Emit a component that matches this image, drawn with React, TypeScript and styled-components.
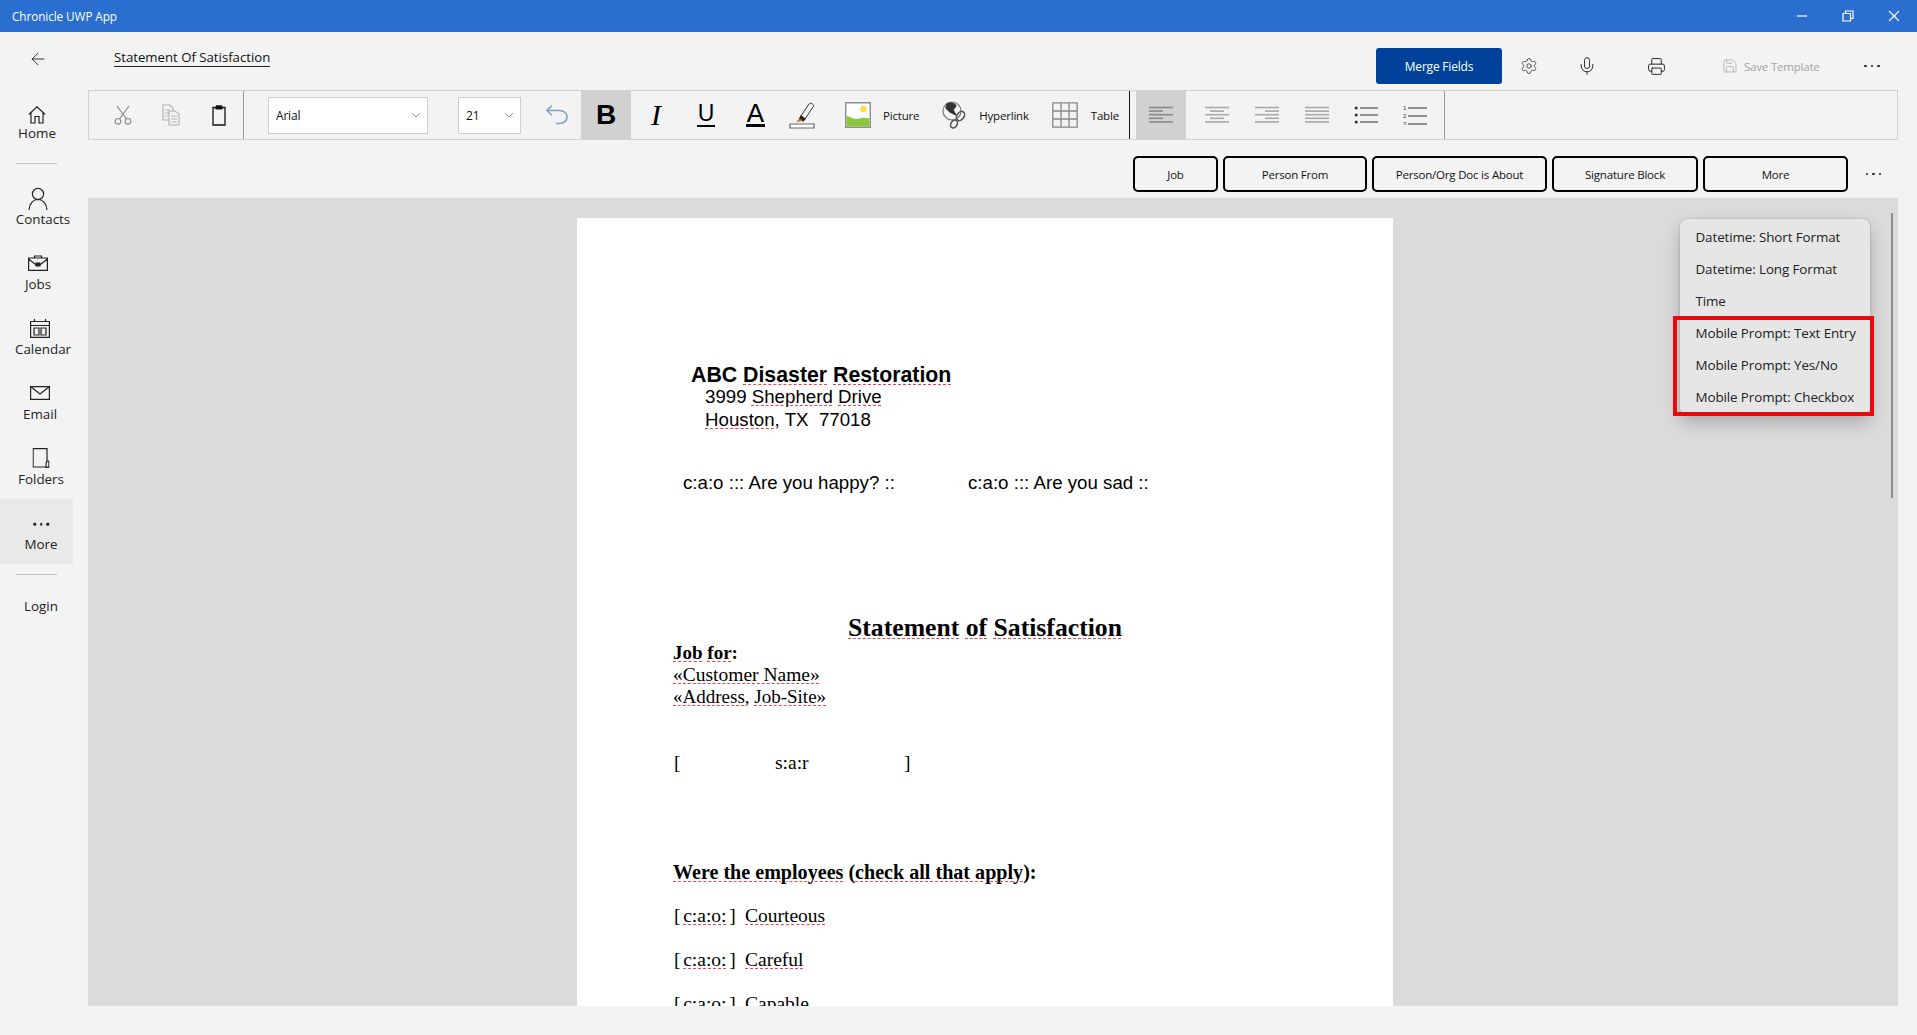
import React from "react";
import styled, { createGlobalStyle } from "styled-components";
import { ArrowLeft, Settings, Mic, Printer, Save } from "lucide-react";

const Global = createGlobalStyle`
  html, body { margin: 0; padding: 0; background: #f3f3f3; overflow: hidden; }
  * { box-sizing: border-box; }
  #root { width: 1917px; height: 1035px; }
`;
const UI = `"Open Sans", "Noto Sans", sans-serif`;

const Shell = styled.div`
  width: 1917px; height: 1035px; display: flex; flex-direction: column;
  background: #f3f3f3; font-family: ${UI}; color: #1a1a1a; overflow: hidden;
`;
const TitleBar = styled.header`
  height: 32px; flex: none; background: #2a6ecf; display: flex; align-items: center; color: #fff;
  padding-left: 12px;
`;
const AppName = styled.span` font-size: 11.8px; letter-spacing: -0.1px; flex: 1; `;
const WinButton = styled.button`
  width: 46px; height: 32px; border: 0; background: none; padding: 0; color: #fff;
  display: flex; align-items: center; justify-content: center;
`;
const Body = styled.div` flex: 1; display: flex; min-height: 0; `;
const Sidebar = styled.nav` width: 88px; flex: none; display: flex; flex-direction: column; `;
const BackButton = styled.div`
  height: 58px; padding-left: 28px; padding-top: 17px; color: #222;
`;
const NavItem = styled.div<{ $active?: boolean; $h?: number }>`
  width: 73px; height: ${p => p.$h ?? 65}px; position: relative; flex: none;
  background: ${p => (p.$active ? "#e9e9e9" : "transparent")};
`;
const NavIcon = styled.span<{ $x: number; $y: number }>`
  position: absolute; left: ${p => p.$x}px; top: ${p => p.$y}px; transform: translate(-50%, -50%);
  display: flex; color: #222;
`;
const NavLabel = styled.span<{ $x: number; $y: number }>`
  position: absolute; left: ${p => p.$x}px; top: ${p => p.$y}px; transform: translate(-50%, -50%);
  font-size: 13.4px; color: #222; white-space: nowrap;
`;
const NavRule = styled.hr<{ $before: number; $after: number }>`
  width: 41px; height: 1px; margin: ${p => p.$before}px 0 ${p => p.$after}px 16px; border: 0; background: #c4c4c4; flex: none;
`;
const Main = styled.main` flex: 1; min-width: 0; padding: 0 19px 29px 0; display: flex; flex-direction: column; `;
const HeaderRow = styled.div` height: 58px; flex: none; display: flex; padding-top: 16px; `;
const DocTitle = styled.a`
  margin-left: 26px; height: 19px; line-height: 19px; font-size: 13.2px; color: #111;
  border-bottom: 1px solid #222;
`;
const Actions = styled.div` margin-left: auto; display: flex; align-items: center; height: 36px; padding-right: 4px; `;
const MergeButton = styled.button`
  width: 126px; height: 36px; border: 0; border-radius: 3px; background: #00429a; color: #fff;
  font: 12px ${UI}; letter-spacing: -0.2px;
`;
const ActionSlot = styled.div<{ $w: number }>`
  width: ${p => p.$w}px; height: 36px; display: flex; align-items: center; justify-content: center; color: #222;
`;
const SaveSlot = styled.div`
  width: 156px; height: 36px; display: flex; align-items: center; gap: 6px; padding-left: 28px;
  color: #a3a3a3; font-size: 11.5px; letter-spacing: -0.2px; white-space: nowrap;
`;
const Dots = styled.span`
  display: flex; gap: 4px;
  & > i { width: 2.5px; height: 2.5px; border-radius: 50%; background: #222; display: block; }
`;
const Toolbar = styled.div`
  height: 50px; flex: none; display: flex; align-items: stretch; border: 1px solid #d2d2d2; background: #f3f3f3;
`;
const ToolGroupLead = styled.div` display: flex; padding-left: 9px; `;
const ToolButton = styled.div<{ $w?: number; $on?: boolean; $ml?: number; $pl?: number }>`
  width: ${p => p.$w ?? 50}px; margin-left: ${p => p.$ml ?? 0}px; padding-left: ${p => p.$pl ?? 0}px; flex: none;
  display: flex; align-items: center; justify-content: center;
  background: ${p => (p.$on ? "#d1d1d1" : "transparent")}; color: #111;
`;
const ToolDivider = styled.div<{ $c?: string; $ml?: number }>`
  width: 1px; flex: none; background: ${p => p.$c ?? "#9a9a9a"}; margin-left: ${p => p.$ml ?? 0}px;
`;
const Combo = styled.div<{ $w: number; $ml: number }>`
  width: ${p => p.$w}px; margin-left: ${p => p.$ml}px; height: 37px; align-self: center; flex: none;
  background: #fff; border: 1px solid #cfcfcf; display: flex; align-items: center; justify-content: space-between;
  padding: 0 6px 0 7px; font-size: 12px; color: #111; letter-spacing: -0.2px;
`;
const GlyphBold = styled.span` font: bold 28px "Liberation Sans", sans-serif; color: #000; `;
const GlyphItalic = styled.span` font: italic 30px "Liberation Serif", serif; color: #000; `;
const GlyphLined = styled.span<{ $t: number; $fs: number }>`
  font: ${p => p.$fs}px/20px "Liberation Sans", sans-serif; color: #000; display: block; height: 24px;
  padding: 0 1px; border-bottom: ${p => p.$t}px solid #000; text-align: center;
`;
const LabeledTool = styled.div<{ $ml: number; $gap: number }>`
  display: flex; align-items: center; gap: ${p => p.$gap}px; margin-left: ${p => p.$ml}px; flex: none;
  font-size: 11.5px; letter-spacing: -0.2px; color: #111;
`;
const FieldRow = styled.div` height: 58px; flex: none; padding-top: 16px; display: flex; justify-content: flex-end; gap: 5px; `;
const FieldButton = styled.button<{ $w: number }>`
  width: ${p => p.$w}px; height: 36px; border: 2px solid #000; border-radius: 5px; background: #f3f3f3;
  font: 11.5px ${UI}; letter-spacing: -0.2px; color: #111; padding: 0; white-space: nowrap;
`;
const FieldMore = styled.div` width: 45px; height: 36px; display: flex; align-items: center; justify-content: center; padding-right: 4px; `;
const Canvas = styled.section` flex: 1; min-height: 0; background: #dbdbdb; position: relative; overflow: hidden; `;
const Page = styled.article`
  width: 816px; height: 900px; margin: 20px 0 0 489px; background: #fff; padding-top: 146px; color: #000;
`;
const Line = styled.div<{ $left: number; $top?: number; $h?: number; $sans?: boolean; $fs: number; $bold?: boolean }>`
  margin-left: ${p => p.$left}px; margin-top: ${p => p.$top ?? 0}px; height: ${p => p.$h ?? 22}px; line-height: ${p => p.$h ?? 22}px;
  font-family: ${p => (p.$sans ? `"Liberation Sans", Arial, sans-serif` : `"Liberation Serif", "Times New Roman", serif`)};
  font-size: ${p => p.$fs}px; font-weight: ${p => (p.$bold ? 700 : 400)}; white-space: pre;
`;
const Slot = styled.span<{ $w: number }>` width: ${p => p.$w}px; display: inline-block; `;
const Mark = styled.span`
  width: 71px; display: inline-block; word-spacing: -2.2px;
`;
const Sq = styled.span`
  text-decoration: underline dashed #f0474f 1px; text-underline-offset: 2px;
`;
const Menu = styled.div`
  position: absolute; top: 21px; right: 28px; width: 190px; padding: 2px 0 2px; background: #e6e6e6; border-radius: 7px;
  box-shadow: 0 8px 18px rgba(0,0,0,0.22), 0 0 2px rgba(0,0,0,0.25);
`;
const MenuItem = styled.div`
  height: 32px; line-height: 32px; padding-left: 15.5px; font-size: 13.4px; color: #222; white-space: nowrap; letter-spacing: -0.1px;
`;
const Callout = styled.div`
  position: absolute; left: 1585px; top: 118px; width: 201px; height: 100px; border: 4px solid #e8090f; pointer-events: none;
`;
const Scroll = styled.div`
  position: absolute; right: 5px; top: 15px; width: 2px; height: 285px; background: #8c8c8c;
`;

const Ic: React.FC<{ w: number; h?: number; children: React.ReactNode }> = ({ w, h, children }) => (
  <svg width={w} height={h ?? w} viewBox={`0 0 ${w} ${h ?? w}`} fill="none" stroke="currentColor" strokeWidth={1.2}>{children}</svg>
);
const Chevron = () => (
  <Ic w={10} h={6}><path d="M1 1 L5 5 L9 1" stroke="#888" strokeWidth={0.9} /></Ic>
);
const DotsIcon = () => <Dots><i /><i /><i /></Dots>;
const Lines = ({ rows, c = "#9b9b9b" }: { rows: [number, number][]; c?: string }) => (
  <Ic w={24} h={20}>
    {rows.map(([a, b], i) => (
      <path key={i} d={`M${a} ${2.5 + i * 3.6} H${b}`} stroke={c} strokeWidth={1.6} />
    ))}
  </Ic>
);

const nav = [
  { label: "Contacts", ix: 38, lx: 43, iy: 25, icon: <Ic w={20} h={23}><circle cx={10} cy={6.5} r={5.6} /><path d="M1 22.5 C1.5 15.5 5.5 12 10 12 S18.5 15.5 19 22.5" /></Ic> },
  { label: "Jobs", ix: 38, lx: 38, iy: 24, icon: <Ic w={20} h={16}><path d="M6.5 3 V1 H13.5 V3 M.6 3 H19.4 V15.4 H.6 Z M.6 4 L7.5 9.5 H12.5 L19.4 4" /><path d="M8 8 H12 V11 H8 Z" fill="currentColor" /></Ic> },
  { label: "Calendar", ix: 40, lx: 43, iy: 24, icon: <Ic w={20} h={20}><path d="M.6 3.5 H19.4 V19.4 H.6 Z M.6 7.5 H19.4 M4.5 1 V4 M15.5 1 V4 M4 10 H9 V17 H4 Z M11 10 H16 V17 H11 Z" /></Ic> },
  { label: "Email", ix: 40, lx: 40, iy: 24, icon: <Ic w={20} h={14}><path d="M.6 .6 H19.4 V13.4 H.6 Z M1 1 L10 8 L19 1" /></Ic> },
  { label: "Folders", ix: 41, lx: 41, iy: 24, icon: <Ic w={17} h={20}><path d="M14.5 14 V.6 H.6 V19 H14.5 M14.5 13 H16.4 V19.4 H13.6 V15 Z" /></Ic> },
];

const App: React.FC = () => (
  <Shell>
    <Global />
    <TitleBar>
      <AppName>Chronicle UWP App</AppName>
      <WinButton><Ic w={12} h={2}><path d="M1 1 H11" /></Ic></WinButton>
      <WinButton><Ic w={12}><path d="M1 3.5 H8.5 V11 H1 Z M3.5 3 V1 H11 V8.5 H9" /></Ic></WinButton>
      <WinButton><Ic w={12}><path d="M1 1 L11 11 M11 1 L1 11" /></Ic></WinButton>
    </TitleBar>
    <Body>
      <Sidebar>
        <BackButton><ArrowLeft size={20} strokeWidth={1.1} /></BackButton>
        <NavItem>
          <NavIcon $x={37} $y={25}><Ic w={18}><path d="M.8 8.5 L9 .9 L17.2 8.5 M3 7 V17 H7 V10.5 H11 V17 H15 V7" /></Ic></NavIcon>
          <NavLabel $x={37} $y={43}>Home</NavLabel>
        </NavItem>
        <NavRule $before={8} $after={10} />
        {nav.map(n => (
          <NavItem key={n.label}>
            <NavIcon $x={n.ix} $y={n.iy}>{n.icon}</NavIcon>
            <NavLabel $x={n.lx} $y={45}>{n.label}</NavLabel>
          </NavItem>
        ))}
        <NavItem $active>
          <NavIcon $x={41} $y={25}><DotsIcon /></NavIcon>
          <NavLabel $x={41} $y={45}>More</NavLabel>
        </NavItem>
        <NavRule $before={10} $after={10} />
        <NavItem $h={46}>
          <NavLabel $x={41} $y={21}>Login</NavLabel>
        </NavItem>
      </Sidebar>
      <Main>
        <HeaderRow>
          <DocTitle>Statement Of Satisfaction</DocTitle>
          <Actions>
            <MergeButton>Merge Fields</MergeButton>
            <ActionSlot $w={54}><Settings size={18} strokeWidth={1} /></ActionSlot>
            <ActionSlot $w={62}><Mic size={20} strokeWidth={1.1} /></ActionSlot>
            <ActionSlot $w={76}><Printer size={19} strokeWidth={1.2} /></ActionSlot>
            <SaveSlot><Save size={16} strokeWidth={1.1} />Save Template</SaveSlot>
            <ActionSlot $w={44}><DotsIcon /></ActionSlot>
          </Actions>
        </HeaderRow>
        <Toolbar>
          <ToolGroupLead>
            <ToolButton $w={49}>
              <Ic w={18} h={20}>
                <g stroke="#8a8a8a" strokeWidth={1.2}>
                  <path d="M3 1 L12.5 14 M15 1 L5.5 14" />
                  <circle cx={4} cy={16.3} r={2.8} />
                  <circle cx={14} cy={16.3} r={2.8} />
                </g>
              </Ic>
            </ToolButton>
            <ToolButton $w={48}>
              <Ic w={18} h={22}><g stroke="#b5b5b5"><path d="M1 1 H8 L11 4 V16 H1 Z M3 6 H8 M3 9 H8 M3 12 H6" /><path d="M7 7 H13 L17 10 V21 H7 Z M9 12 H15 M9 15 H15 M9 18 H15" fill="#f3f3f3" /></g></Ic>
            </ToolButton>
            <ToolButton $w={48}>
              <Ic w={14} h={22}><path d="M1 3.5 H13 V21 H1 Z M4.5 3.5 V2 H9.5 V3.5" strokeWidth={1.3} /><path d="M4 3.5 H10 V5 H4 Z" fill="#111" /></Ic>
            </ToolButton>
          </ToolGroupLead>
          <ToolDivider />
          <Combo $w={160} $ml={24}>Arial<Chevron /></Combo>
          <Combo $w={63} $ml={30}>21<Chevron /></Combo>
          <ToolButton $w={60} $pl={12}>
            <Ic w={24} h={22}><path d="M7 1.5 L2 6.5 L7 11.5 M2 6.5 H14.5 C19 6.5 22 9.5 22 13 S19 19.5 14.5 19.5 H11" stroke="#7f9fcb" strokeWidth={1.6} /></Ic>
          </ToolButton>
          <ToolButton $on><GlyphBold>B</GlyphBold></ToolButton>
          <ToolButton><GlyphItalic>I</GlyphItalic></ToolButton>
          <ToolButton><GlyphLined $t={2} $fs={23}>U</GlyphLined></ToolButton>
          <ToolButton $w={49}><GlyphLined $t={3} $fs={26}>A</GlyphLined></ToolButton>
          <ToolButton $w={44}>
            <Ic w={26} h={28}>
              <path d="M12 15 L20 3 C21 2 22 2 23.5 3 C25 4 25 5 24 6 L16 18 Z" strokeWidth={1} stroke="#333" />
              <path d="M12 15 L16 18 L14 20 L10.5 17.5 Z" fill="#222" stroke="#222" />
              <path d="M10.5 17.5 L14 20 L7 21 Z" fill="#c8741b" stroke="none" />
              <path d="M1 23 H25 V27 H1 Z" stroke="#666" fill="#fff" />
            </Ic>
          </ToolButton>
          <LabeledTool $ml={21} $gap={12}>
            <Ic w={26}>
              <path d="M.7 .7 H25.3 V25.3 H.7 Z" stroke="#8d8d8d" strokeWidth={1.4} fill="#fff" />
              <path d="M1.5 14 C7 15 10 19 16 16 C19 15 22 17 24.5 16 V24.5 H1.5 Z" fill="#8cc63f" stroke="none" />
              <circle cx={18.5} cy={7} r={3.2} fill="#ffdd44" stroke="none" />
            </Ic>
            Picture
          </LabeledTool>
          <LabeledTool $ml={23} $gap={12}>
            <Ic w={25} h={28}>
              <circle cx={10} cy={10} r={9} stroke="#777" />
              <path d="M5 3 C8 1 13 2 14 5 L11 9 L14 14 L8 11 L4 7 Z" fill="#333" stroke="#333" />
              <ellipse cx={18.5} cy={15} rx={3.5} ry={5} transform="rotate(35 18.5 15)" stroke="#555" strokeWidth={1.6} />
              <ellipse cx={12} cy={23} rx={3} ry={4.2} transform="rotate(35 12 23)" stroke="#555" strokeWidth={1.6} />
            </Ic>
            Hyperlink
          </LabeledTool>
          <LabeledTool $ml={23} $gap={13}>
            <Ic w={26}>
              <path d="M.8 .8 H25.2 V25.2 H.8 Z M.8 9 H25.2 M.8 17 H25.2 M9 .8 V25.2 M17 .8 V25.2" stroke="#888" strokeWidth={1.3} />
            </Ic>
            Table
          </LabeledTool>
          <ToolDivider $c="#111" $ml={10} />
          <ToolButton $on $ml={6}><Lines c="#8a8a8a" rows={[[0, 24], [0, 14], [0, 24], [0, 14], [0, 24]]} /></ToolButton>
          <ToolButton $w={56} $pl={7}><Lines c="#a8a8a8" rows={[[0, 24], [5, 19], [0, 24], [5, 19], [0, 24]]} /></ToolButton>
          <ToolButton><Lines c="#a8a8a8" rows={[[0, 24], [10, 24], [0, 24], [10, 24], [0, 24]]} /></ToolButton>
          <ToolButton><Lines c="#a8a8a8" rows={[[0, 24], [0, 24], [0, 24], [0, 24], [0, 24]]} /></ToolButton>
          <ToolButton $w={48}>
            <Ic w={24} h={20}>
              {[3, 10, 17].map(y => (
                <g key={y}><circle cx={2.2} cy={y} r={1.5} fill="#333" stroke="none" /><path d={`M6 ${y} H24`} stroke="#333" strokeWidth={1} /></g>
              ))}
            </Ic>
          </ToolButton>
          <ToolButton $w={50}>
            <Ic w={24} h={20}>
              {["1", "2", "3"].map((t, i) => (
                <g key={t}>
                  <text x={0} y={5 + i * 8} fontSize={6} fill="#333" stroke="none" fontFamily="Liberation Sans">{t}</text>
                  <path d={`M5 ${3 + i * 8} H24`} stroke="#333" strokeWidth={1} />
                </g>
              ))}
            </Ic>
          </ToolButton>
          <ToolDivider $ml={4} />
        </Toolbar>
        <FieldRow>
          <FieldButton $w={85}>Job</FieldButton>
          <FieldButton $w={144}>Person From</FieldButton>
          <FieldButton $w={175}>Person/Org Doc is About</FieldButton>
          <FieldButton $w={146}>Signature Block</FieldButton>
          <FieldButton $w={145}>More</FieldButton>
          <FieldMore><DotsIcon /></FieldMore>
        </FieldRow>
        <Canvas>
          <Page>
            <Line $sans $bold $fs={21.3} $left={114}>ABC <Sq>Disaster</Sq> <Sq>Restoration</Sq></Line>
            <Line $sans $fs={18.7} $left={128}>3999 <Sq>Shepherd</Sq> <Sq>Drive</Sq></Line>
            <Line $sans $fs={18.7} $left={128} $top={1}><Sq>Houston</Sq>, TX  77018</Line>
            <Line $sans $fs={18.7} $left={106} $top={41}><Slot $w={285}>c:a:o ::: Are you happy? ::</Slot>c:a:o ::: Are you sad ::</Line>
            <Line $bold $fs={25.7} $h={24} $left={271} $top={122}><Sq>Statement</Sq> <Sq>of</Sq> <Sq>Satisfaction</Sq></Line>
            <Line $bold $fs={19} $left={96} $top={2}><Sq>Job</Sq> <Sq>for</Sq>:</Line>
            <Line $fs={19.5} $left={96}><Sq>«Customer Name»</Sq></Line>
            <Line $fs={19} $left={96}><Sq>«Address</Sq>, <Sq>Job-Site»</Sq></Line>
            <Line $fs={19.5} $left={97} $top={44}><Slot $w={101}>[</Slot><Slot $w={129}>s:a:r</Slot>]</Line>
            <Line $bold $fs={20.1} $left={96} $top={87}><Sq>Were the employees</Sq> (<Sq>check all that apply</Sq>):</Line>
            <Line $fs={19.5} $left={97} $top={22}><Mark>[ <Sq>c:a:o:</Sq> ]</Mark><Sq>Courteous</Sq></Line>
            <Line $fs={19.5} $left={97} $top={22}><Mark>[ <Sq>c:a:o:</Sq> ]</Mark><Sq>Careful</Sq></Line>
            <Line $fs={19.5} $left={97} $top={22}><Mark>[ <Sq>c:a:o:</Sq> ]</Mark><Sq>Capable</Sq></Line>
          </Page>
          <Scroll />
          <Menu>
            <MenuItem>Datetime: Short Format</MenuItem>
            <MenuItem>Datetime: Long Format</MenuItem>
            <MenuItem>Time</MenuItem>
            <MenuItem>Mobile Prompt: Text Entry</MenuItem>
            <MenuItem>Mobile Prompt: Yes/No</MenuItem>
            <MenuItem>Mobile Prompt: Checkbox</MenuItem>
          </Menu>
          <Callout />
        </Canvas>
      </Main>
    </Body>
  </Shell>
);

export default App;
